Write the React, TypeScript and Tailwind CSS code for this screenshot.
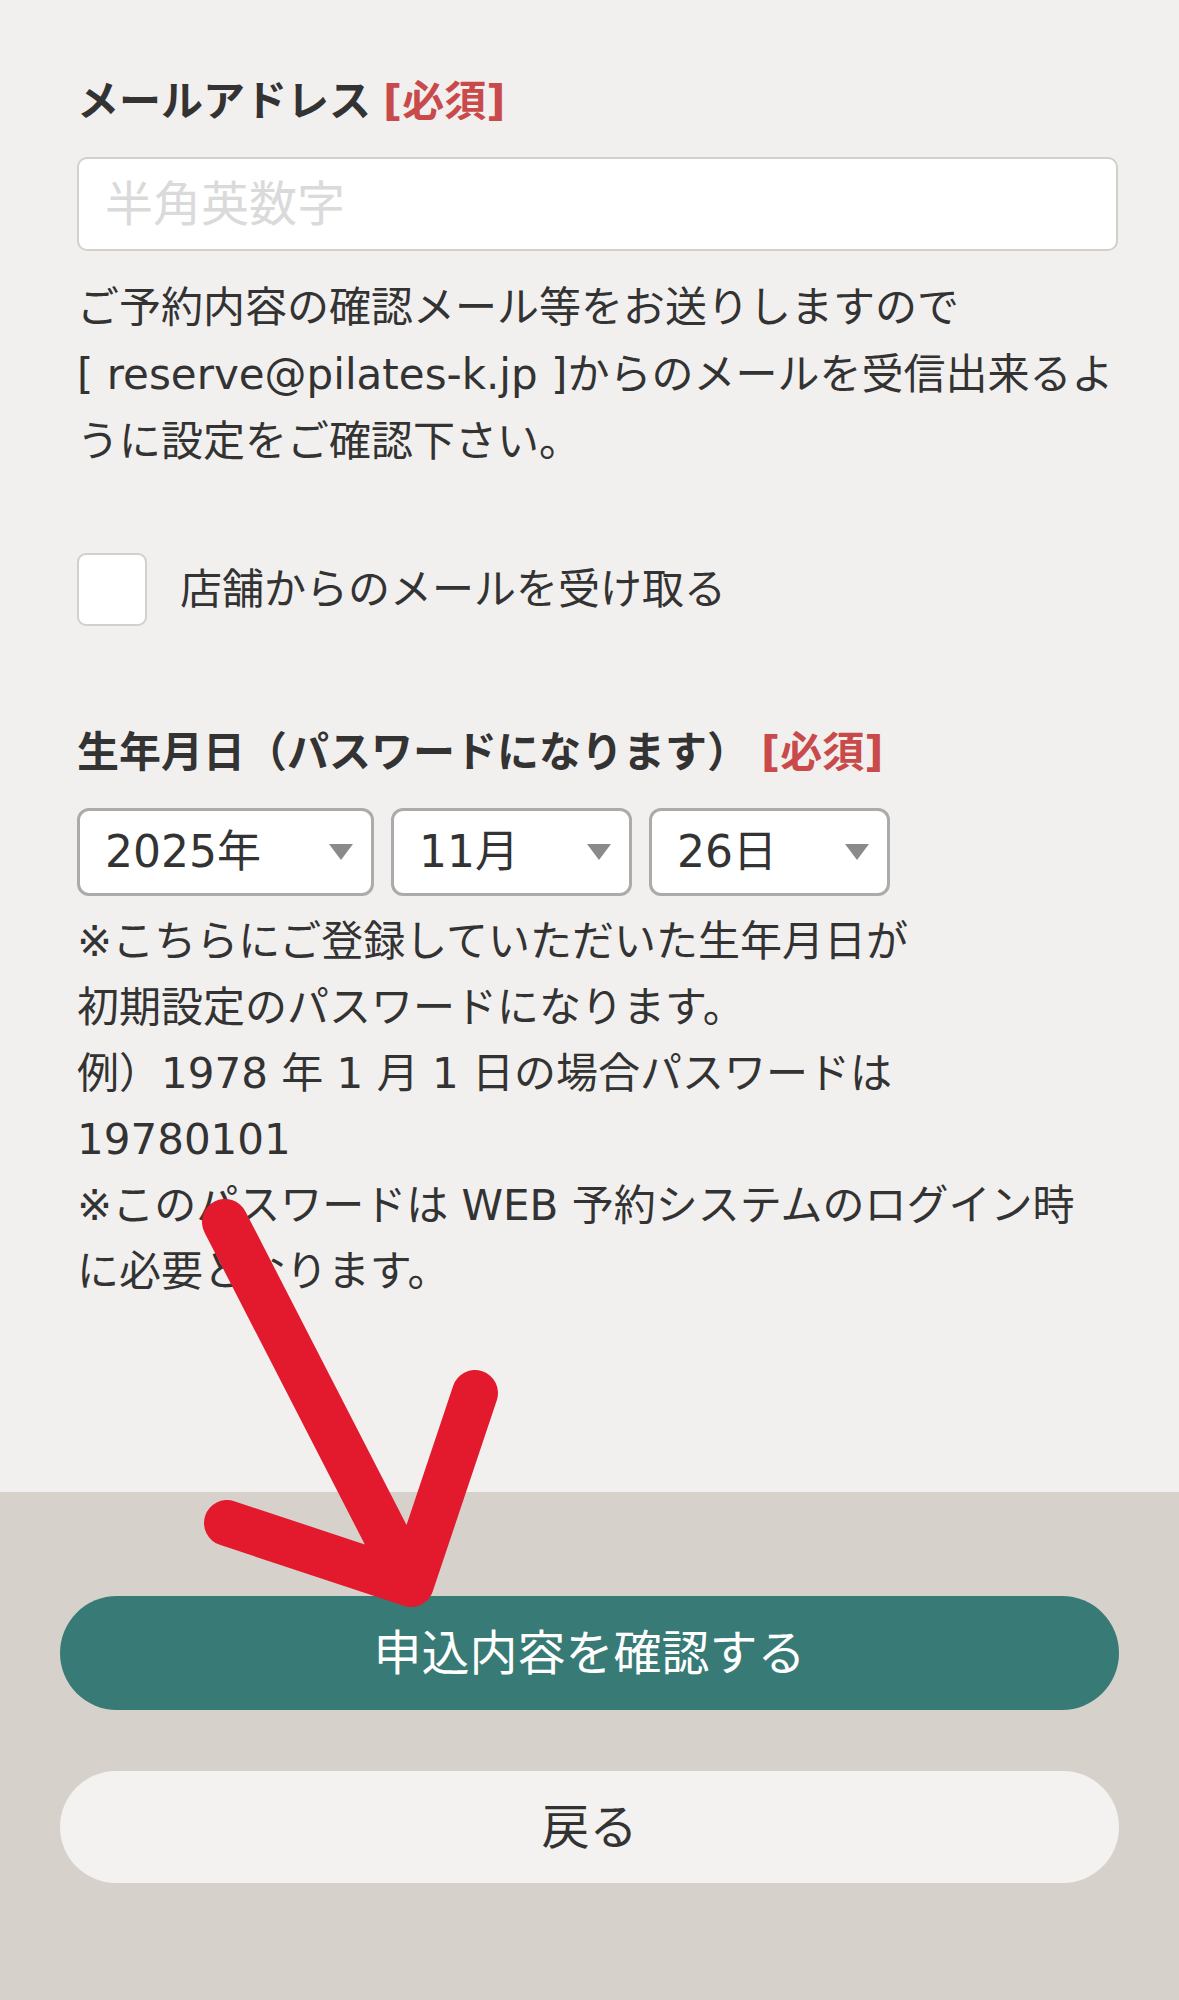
import React from "react";

const font = { fontFamily: '"DejaVu Sans", "Noto Sans CJK JP", sans-serif' };

const Required = () => (
  <span className="ml-[12px] font-bold text-[#c94a4a]">[必須]</span>
);

const DateSelect = ({ value, width }: { value: string; width: string }) => (
  <div
    className={`flex h-[88px] ${width} items-center justify-between rounded-[12px] border-[3px] border-[#ababab] bg-white pl-[25px] pr-[18px] text-[44px] text-[#333]`}
  >
    <span className="leading-none">{value}</span>
    <svg width="24" height="16" viewBox="0 0 24 16">
      <path d="M0 0 L24 0 L12 16 Z" fill="#8a8a8a" />
    </svg>
  </div>
);

const notes = [
  "※こちらにご登録していただいた生年月日が",
  "初期設定のパスワードになります。",
  "例）1978 年 1 月 1 日の場合パスワードは",
  "19780101",
  "※このパスワードは WEB 予約システムのログイン時",
  "に必要となります。",
];

export default function App() {
  return (
    <div className="relative w-[1179px] text-[#333]" style={font}>
      {/* form */}
      <section className="bg-[#f2f0ee] pl-[77px] pr-[61px] pt-[70px] pb-[187px]">
        <h3 className="text-[42px] font-bold leading-[63px] whitespace-nowrap">
          メールアドレス
          <Required />
        </h3>
        <input
          type="email"
          placeholder="半角英数字"
          className="mt-[24px] block h-[94px] w-full rounded-[10px] border-2 border-[#d3cfca] bg-white px-[26px] text-[48px] outline-none placeholder:text-[#dadada]"
        />
        <p className="mt-[23px] text-[42px] leading-[67px] whitespace-nowrap">
          ご予約内容の確認メール等をお送りしますので
          <br />
          [ reserve@pilates-k.jp ]からのメールを受信出来るよ
          <br />
          うに設定をご確認下さい。
        </p>

        <label className="mt-[78px] flex items-center gap-[33px]">
          <span className="block h-[73px] w-[70px] rounded-[9px] border-2 border-[#d3cfca] bg-white" />
          <span className="text-[42px] leading-[63px]">店舗からのメールを受け取る</span>
        </label>

        <h3 className="mt-[95px] text-[42px] font-bold leading-[63px] whitespace-nowrap">
          生年月日（パスワードになります）
          <Required />
        </h3>
        <div className="mt-[24px] flex gap-[17px]">
          <DateSelect value="2025年" width="w-[297px]" />
          <DateSelect value="11月" width="w-[241px]" />
          <DateSelect value="26日" width="w-[241px]" />
        </div>
        <div className="mt-[13px] text-[42px] leading-[66px]">
          {notes.map((line, i) => (
            <div key={i} className="whitespace-nowrap">
              {line}
            </div>
          ))}
        </div>
      </section>

      {/* actions */}
      <section className="flex flex-col gap-[61px] bg-[#d6d1cb] px-[60px] pt-[104px] pb-[117px]">
        <button className="h-[114px] w-full rounded-full bg-[#387a75] text-[48px] text-white">
          申込内容を確認する
        </button>
        <button className="h-[112px] w-full rounded-full bg-[#f3f2f0] text-[48px] text-[#333]">
          戻る
        </button>
      </section>

      {/* hand-drawn arrow pointing at the confirm button */}
      <svg
        className="pointer-events-none absolute left-0 top-0"
        width="1179"
        height="2000"
        viewBox="0 0 1179 2000"
      >
        <path
          d="M225 1222 L411 1584 M475 1393 L411 1584 L227 1523"
          fill="none"
          stroke="#e3192d"
          strokeWidth="46"
          strokeLinecap="round"
          strokeLinejoin="round"
        />
      </svg>
    </div>
  );
}
